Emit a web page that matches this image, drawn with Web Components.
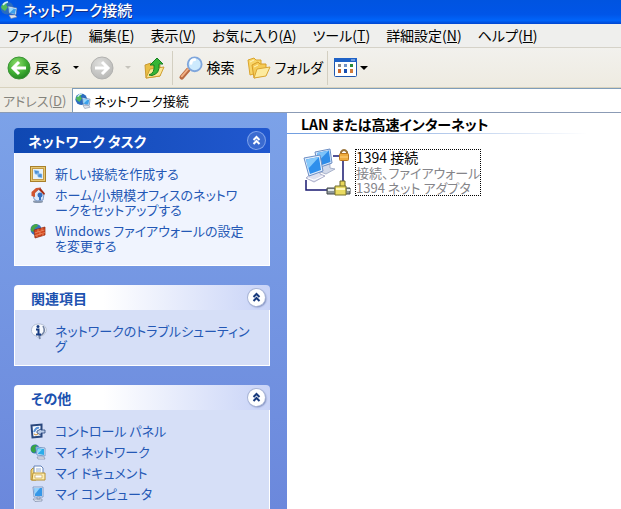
<!DOCTYPE html>
<html lang="ja">
<head>
<meta charset="utf-8">
<meta name="viewport" content="width=device-width, initial-scale=1">
<title>ネットワーク接続</title>
<style>
  body {
    margin: 0;
    font: 14px/15px "Noto Sans CJK JP", sans-serif;
    font-feature-settings: "palt";
    color: #000;
  }
</style>
</head>
<body>
<xp-window>
  <xp-titlebar slot="title">ネットワーク接続</xp-titlebar>

  <xp-menubar slot="menu">
    <xp-menu>ファイル(<u>F</u>)</xp-menu>
    <xp-menu>編集(<u>E</u>)</xp-menu>
    <xp-menu>表示(<u>V</u>)</xp-menu>
    <xp-menu>お気に入り(<u>A</u>)</xp-menu>
    <xp-menu>ツール(<u>T</u>)</xp-menu>
    <xp-menu>詳細設定(<u>N</u>)</xp-menu>
    <xp-menu>ヘルプ(<u>H</u>)</xp-menu>
  </xp-menubar>

  <xp-toolbar slot="toolbar"></xp-toolbar>
  <xp-address slot="address" value="ネットワーク接続"></xp-address>

  <xp-panel slot="side" primary>
    <span slot="heading">ネットワーク タスク</span>
    <xp-task icon="wizard">新しい接続を作成する</xp-task>
    <xp-task icon="home">ホーム/小規模オフィスのネットワ<br>ークをセットアップする</xp-task>
    <xp-task icon="firewall">Windows ファイアウォールの設定<br>を変更する</xp-task>
  </xp-panel>
  <xp-panel slot="side">
    <span slot="heading">関連項目</span>
    <xp-task icon="info">ネットワークのトラブルシューティン<br>グ</xp-task>
  </xp-panel>
  <xp-panel slot="side">
    <span slot="heading">その他</span>
    <xp-task icon="control">コントロール パネル</xp-task>
    <xp-task icon="places">マイ ネットワーク</xp-task>
    <xp-task icon="documents">マイ ドキュメント</xp-task>
    <xp-task icon="computer">マイ コンピュータ</xp-task>
  </xp-panel>

  <xp-group>
    <span slot="heading">LAN または高速インターネット</span>
    <xp-connection>
      <span slot="name">1394 接続</span>
      <span slot="status">接続、ファイアウォール</span>
      <span slot="device">1394 ネット アダプタ</span>
    </xp-connection>
  </xp-group>
</xp-window>

<script>
const ICONS = {
  network: ["0 0 18 18", `
    <circle cx="7" cy="7" r="6.500" fill="#2a6cc0"/>
    <path d="M1 6q2-5 7-5l-2 3 2 2-3 4-3-2z" fill="#52b95c"/>
    <path d="M3 4q2-3 5-3" stroke="#d4f0ff" stroke-width="1.500" fill="none"/>
    <path d="M8 5l9 2-1 7-7-2z" fill="#e4eefb" stroke="#35609c" stroke-width=".6"/>
    <path d="M9 6.500l7 1.500-1 5-5-1z" fill="#3ba0ec"/><path d="M9 6.500l5 1-4 4z" fill="#9bd8fb"/>
    <path d="M9 14l6 0 2 2-6 1.500z" fill="#dfe4ee" stroke="#7d8aa5" stroke-width=".6"/>`],
  back: ["0 0 24 24", `
    <defs><radialGradient id="g" cx=".4" cy=".3" r=".75"><stop stop-color="#8fdc6c"/><stop offset=".6" stop-color="#3fae32"/><stop offset="1" stop-color="#208020"/></radialGradient></defs>
    <circle cx="12" cy="12" r="11" fill="url(#g)" stroke="#3c9436"/>
    <path d="M12 6l-6 6 6 6M6.500 12H19" fill="none" stroke="#fff" stroke-width="3"/>`],
  forward: ["0 0 24 24", `
    <defs><radialGradient id="g" cx=".4" cy=".3" r=".8"><stop stop-color="#dededc"/><stop offset="1" stop-color="#b4b4b2"/></radialGradient></defs>
    <circle cx="12" cy="12" r="11" fill="url(#g)" stroke="#b2b2b0"/>
    <path d="M12 6l6 6-6 6M5 12h12.500" fill="none" stroke="#fff" stroke-width="3"/>`],
  up: ["0 0 22 22", `
    <path d="M1 8l6-2 2 2h7v11l-14 2z" fill="#e9bf45" stroke="#c99a33"/>
    <path d="M2 21L6 12l14-2-4 9z" fill="#fbe695" stroke="#cf9f33"/>
    <path d="M5 18q6-2 5-10H6l7-7 6 6h-4q1 10-7 11.500z" fill="#35b535" stroke="#168020"/>`],
  search: ["0 0 26 26", `
    <path d="M10 15L3 23" stroke="#b96a42" stroke-width="5" stroke-linecap="round"/>
    <path d="M10 14L3 22" stroke="#f2b184" stroke-width="2" stroke-linecap="round"/>
    <circle cx="17" cy="9" r="7.500" fill="#cdeafd" stroke="#7fa6dc" stroke-width="2"/>
    <path d="M13 8q0-4 4-4" fill="none" stroke="#fff" stroke-width="3" stroke-linecap="round"/>`],
  folders: ["0 0 24 24", `
    <path d="M1 4l6-2 2 2h5v12l-11 3z" fill="#f8d568" stroke="#dba52d"/>
    <path d="M5 9l6-3 2 2h6v11L7 22z" fill="#f5cb56" stroke="#d79c27"/>
    <path d="M7 22L10 13l13-2-4 9z" fill="#fdeb9f" stroke="#d9a534"/>
    <path d="M7 11l4-2M3 6l4-2" stroke="#fff3bd"/>`],
  views: ["0 0 23 19", `
    <rect x=".5" y=".5" width="22" height="18" rx="1" fill="#fff" stroke="#1d57b0"/>
    <rect width="23" height="4" fill="#1f62c6"/><path d="M17 2h4" stroke="#b8d4fa"/>
    <g><rect x="4" y="6" width="3" height="3" fill="#888"/><rect x="10" y="6" width="3" height="3" fill="#7194c9"/><rect x="16" y="6" width="3" height="3" fill="#278a39"/>
    <rect x="4" y="11" width="3" height="4" fill="#cb672c"/><rect x="10" y="11" width="3" height="4" fill="#164eb0"/><rect x="16" y="11" width="3" height="4" fill="#d07b3b"/></g>`],
  wizard: ["0 0 16 16", `
    <rect x=".5" y=".5" width="15" height="15" fill="#e6c872" stroke="#a8802c"/>
    <rect x="2.500" y="2.500" width="11" height="11" fill="#e7f2fb" stroke="#c49a48"/>
    <path d="M4 4l5 1v4L5 8zM7 7l5 1v4l-4-1z" fill="#4b8fd6" stroke="#a9d2f5" stroke-width=".5"/>`],
  home: ["0 0 16 16", `
    <ellipse cx="8" cy="14.500" rx="5" ry="1.500" fill="#8b99ae"/>
    <path d="M3 7l6-5 5 5-1 6-6 1-3-2z" fill="#dce9fa" stroke="#7f9dcc"/>
    <path d="M1.500 9V5L6 1l5-.5L5 6v4z" fill="#d05530"/>
    <path d="M10 .5l5 6-1 1.500-5-5z" fill="#a32c14"/>
    <circle cx="10" cy="8" r="2.500" fill="#346fc0"/><path d="M9 9h2v4H9z" fill="#346fc0"/>`],
  firewall: ["0 0 16 16", `
    <circle cx="6" cy="6.500" r="5.500" fill="#3973bd"/>
    <path d="M1 5q2-4 6-4l1 2-3 2-1 4-3-1z" fill="#47a845"/>
    <path d="M4 7l11-3v8L5 15z" fill="#d3461f" stroke="#8c2810" stroke-width=".7"/>
    <path d="M4.500 10l10-3M5 12.500l10-3M8 6v3M12 5v3M10 9v3M7 12v2M13 11v2" stroke="#f1a67c" stroke-width=".6"/>`],
  info: ["0 0 16 16", `
    <path d="M8 1a7 6 0 0 1 2.500 12L10 16l-4-3A7 6.200 0 0 1 8 1z" fill="#f5f8fd" stroke="#b4bfd4"/>
    <path d="M13 3q4 7-4 10l1 3" fill="none" stroke="#7384a5" stroke-width="1.500"/>
    <circle cx="8" cy="3.500" r="1.500" fill="#173c83"/>
    <path d="M6 6.500h2.500V11M6 11.500h5" fill="none" stroke="#173c83" stroke-width="2"/>`],
  control: ["0 0 16 16", `
    <path d="M1.500 2.500l10-1v12l-9 1z" fill="#f5f9ff" stroke="#29477d" stroke-width="2"/>
    <path d="M4 9q2-5 5-4" fill="none" stroke="#5c95da" stroke-width="2"/>
    <path d="M7 8l4-2v1h4v3h-4v2l-4-2z" fill="#b9cbe7" stroke="#29477d" stroke-width=".8"/>
    <path d="M4 11l2 1 2-1" fill="none" stroke="#d09035"/>`],
  places: ["0 0 16 16", `
    <circle cx="5" cy="5" r="4.500" fill="#3570bb"/><path d="M1 4q2-4 6-3L5 4l1 3-2 2-3-2z" fill="#36a445"/>
    <path d="M6 3l9 1v8l-8-1z" fill="#e7f0fb" stroke="#7c9cc7"/>
    <path d="M7 4l7 1v6l-6-1z" fill="#2bacea"/><path d="M8 5l4 .5-4 4z" fill="#8fdcfa"/>
    <path d="M7 13l7 0 1 2H8z" fill="#eef1f8" stroke="#7e89a5" stroke-width=".7"/>`],
  documents: ["0 0 16 16", `
    <path d="M1 5l2-2h3v12H1z" fill="#f3d77c" stroke="#b8902f"/>
    <path d="M4 1h7l2 2v9H4z" fill="#fff" stroke="#6683b8"/>
    <path d="M6 4h5M6 6h5" stroke="#92acd8"/>
    <path d="M3 8h12v7H2z" fill="#fdedb0" stroke="#b8902f"/><path d="M5 10h7v3H5z" fill="#fff" stroke="#c4a553" stroke-width=".7"/>`],
  computer: ["0 0 16 16", `
    <path d="M3 1l10 0v10l-9 0z" fill="#e4edfa" stroke="#809cc8"/>
    <path d="M4 2l8 0v8L5 10z" fill="#3597e8"/><path d="M4 2l6 0L5 8z" fill="#94d1fb"/>
    <path d="M7 11h3v2H7zM3 13l9 0 0 2-7 .5z" fill="#dde3ee" stroke="#7d8ba7" stroke-width=".7"/>`],
  lan: ["0 0 48 48", `
    <path d="M30 7h10v30M3 31v10h22" fill="none" stroke="#191970" stroke-width="1.500"/>
    <path d="M18 17l9-2 0 4 5 1-9 5-8-3z" fill="#d3daea" stroke="#8f9cba" stroke-width=".7"/>
    <path d="M12 3l15-3 2 14-14 5z" fill="#dceafb" stroke="#6c8ec4"/>
    <path d="M14 4l12-2.500 1.500 11.500L16 17z" fill="#2e8ce8"/><path d="M14 4l12-2.500-11 11z" fill="#7cc2f9"/>
    <path d="M9 24l8-3 0 4 5 2-11 6-8-4z" fill="#dfe1ef" stroke="#8f93b8" stroke-width=".7"/>
    <path d="M5 29l6 2 9-4" fill="none" stroke="#fff"/>
    <path d="M1 9l16-3 3 16-14 5z" fill="#e4effc" stroke="#6c8ec4"/>
    <path d="M3 10.500l13-2.500 2 13-11 4z" fill="#2f8fec"/><path d="M3 10.500l13-2.500L5 20z" fill="#86c9fb"/>
    <path d="M38 5V3q3-4 6 0v2" fill="none" stroke="#99733a" stroke-width="2"/>
    <rect x="36.500" y="4.500" width="9" height="7" rx="1" fill="#eeaa3c" stroke="#b87520"/><path d="M37 8h8" stroke="#ffd481"/>
    <path d="M37 32h5v7h-5z" fill="#e8d75a" stroke="#6c6628"/>
    <path d="M24 39h23v6H24z" fill="#8f9899" stroke="#43494a"/>
    <path d="M32 37h11v9H32z" fill="#eadb62" stroke="#77702a"/><path d="M25 41h6M44 41h3" stroke="#e4eaea" stroke-width="2"/>
    <path d="M33 40h9" stroke="#fff8b8" stroke-width="2"/>`]
};

class XpIcon extends HTMLElement {
  static get styles() {
    return /*css*/ `
      :host { display: block; flex: none; width: 16px; height: 16px; }
      svg { display: block; width: 100%; height: 100%; overflow: visible; }
    `;
  }

  connectedCallback() {
    if (!this.shadowRoot) this.attachShadow({ mode: "open" });
    const [viewBox, shapes] = ICONS[this.getAttribute("name")];
    this.shadowRoot.innerHTML = /*html*/ `
      <style>${XpIcon.styles}</style>
      <svg viewBox="${viewBox}" aria-hidden="true">${shapes}</svg>
    `;
  }
}

// Shared base: every other element only supplies its styles and markup.
class XpElement extends HTMLElement {
  connectedCallback() {
    if (!this.shadowRoot) this.attachShadow({ mode: "open" });
    this.shadowRoot.innerHTML = /*html*/ `
      <style>
        * { box-sizing: border-box; }
        button, input { font: inherit; font-feature-settings: inherit; color: inherit; padding: 0; margin: 0; border: 0; background: none; }
        ${this.styles}
      </style>
      ${this.markup}
    `;
  }
}

class XpWindow extends XpElement {
  get styles() {
    return /*css*/ `
      :host { display: grid; grid-template-rows: auto auto auto auto 1fr; height: 100vh; overflow: hidden; background: #fff; }
      .content { display: grid; grid-template-columns: 287px 1fr; min-height: 0; border-top: 1px solid #8b9bb5; }
      aside {
        display: flex; flex-direction: column; gap: 19px; min-height: 0; overflow: hidden;
        padding: 15px 17px 0 14px; background: linear-gradient(#7ca2e8, #6b88dc);
      }
    `;
  }
  get markup() {
    return /*html*/ `
      <slot name="title"></slot>
      <slot name="menu"></slot>
      <slot name="toolbar"></slot>
      <slot name="address"></slot>
      <div class="content">
        <aside><slot name="side"></slot></aside>
        <main><slot></slot></main>
      </div>
    `;
  }
}

class XpTitlebar extends XpElement {
  get styles() {
    return /*css*/ `
      :host { display: block; }
      header {
        display: flex; align-items: center; gap: 5px; height: 24px; padding: 0 2px 4px 0; color: #fff;
        background: linear-gradient(#0054e0, #0055e8 60%, #0064fa 85%, #0046d0);
      }
      h1 { margin: 0; font-size: 15px; font-weight: 500; line-height: 20px; text-shadow: 1px 1px #0f2f8c; }
      xp-icon { width: 18px; height: 18px; }
    `;
  }
  get markup() {
    return /*html*/ `<header><xp-icon name="network"></xp-icon><h1><slot></slot></h1></header>`;
  }
}

class XpMenubar extends XpElement {
  get styles() {
    return /*css*/ `
      :host { display: block; background: #efefed; border-bottom: 1px solid #d5d2c8; }
      nav { display: flex; gap: 16px; height: 23px; padding: 0 7px; }
    `;
  }
  get markup() {
    return /*html*/ `<nav><slot></slot></nav>`;
  }
}

class XpMenu extends XpElement {
  get styles() {
    return /*css*/ `
      :host { display: flex; }
      button { white-space: nowrap; }
    `;
  }
  get markup() {
    return /*html*/ `<button type="button"><slot></slot></button>`;
  }
}

class XpToolbar extends XpElement {
  get styles() {
    return /*css*/ `
      :host { display: block; border-bottom: 1px solid #d8d2bd; background: linear-gradient(#f2f1ed, #eeebe1); }
      div { display: flex; align-items: center; height: 39px; padding: 0 7px; }
      button { display: flex; align-items: center; gap: 4px; height: 30px; white-space: nowrap; }
      xp-icon { width: 24px; height: 24px; }
      .up { margin: 0 6px 0 2px; }
      .up xp-icon { width: 22px; height: 22px; }
      .views xp-icon { width: 23px; height: 19px; }
      .views { gap: 3px; }
      .drop { width: 28px; justify-content: center; }
      .drop::before, .views::after { content: ""; border: 4px solid transparent; border-top-color: #000; border-bottom: 0; }
      .drop::before { border-width: 3px; border-bottom: 0; }
      .drop[disabled]::before { border-top-color: #c5c3bc; }
      hr { width: 1px; height: 34px; margin: 0 6px 0 0; border: 0; background: #d3cfc1; }
      .folders { margin: 0 4px 0 12px; }
    `;
  }
  get markup() {
    return /*html*/ `
      <div role="toolbar">
        <button type="button"><xp-icon name="back"></xp-icon>戻る</button>
        <button type="button" class="drop" aria-label="戻る履歴"></button>
        <button type="button" disabled aria-label="進む"><xp-icon name="forward"></xp-icon></button>
        <button type="button" class="drop" disabled aria-label="進む履歴"></button>
        <button type="button" class="up" aria-label="上へ"><xp-icon name="up"></xp-icon></button>
        <hr>
        <button type="button"><xp-icon name="search"></xp-icon>検索</button>
        <button type="button" class="folders"><xp-icon name="folders"></xp-icon>フォルダ</button>
        <hr>
        <button type="button" class="views" aria-label="表示"><xp-icon name="views"></xp-icon></button>
      </div>
    `;
  }
}

class XpAddress extends XpElement {
  get styles() {
    return /*css*/ `
      :host { display: block; background: #efede5; font-size: 13px; }
      form { display: flex; height: 24px; }
      label { flex: none; width: 72px; padding: 5px 0 0 3px; color: #85847d; white-space: nowrap; }
      .field { display: flex; flex: 1; align-items: center; gap: 3px; padding-left: 2px; background: #fff; border: 1px solid #7f9db9; border-width: 1px 0 0 1px; }
      input { flex: 1; min-width: 0; height: 20px; outline: 0; }
    `;
  }
  get markup() {
    return /*html*/ `
      <form>
        <label for="address">アドレス(<u>D</u>)</label>
        <div class="field">
          <xp-icon name="network"></xp-icon>
          <input id="address" type="text" value="${this.getAttribute("value")}">
        </div>
      </form>
    `;
  }
}

class XpPanel extends XpElement {
  get styles() {
    return /*css*/ `
      :host { display: block; flex: none; }
      header {
        display: flex; align-items: center; justify-content: space-between; height: 25px; padding: 0 5px 0 17px;
        border-radius: 4px 4px 0 0; color: #1d52b0; background: linear-gradient(90deg, #fff 35%, #c8d3f7);
      }
      h2 { margin: 0; font-size: 14px; line-height: 18px; font-weight: 700; }
      button { width: 17px; height: 17px; border-radius: 50%; background: #fff; box-shadow: 0 0 0 1px #a9b5d6, 1px 1px 2px #5869a0; color: #183a7c; }
      svg { display: block; width: 17px; height: 17px; fill: none; stroke: currentColor; stroke-width: 2; }
      .body { display: flex; flex-direction: column; gap: 6px; padding: 13px 15px 12px; border: 1px solid #fff; border-top: 0; background: #d6dff7; }
      :host([primary]) header { padding-left: 14px; color: #fff; background: linear-gradient(90deg, #0f48b2, #2158cf); }
      :host([primary]) button { background: #3b6bd0; color: #fff; box-shadow: 0 0 0 1px #7da1ea; }
      :host([primary]) .body { background: #f0f4fe; }
    `;
  }
  get markup() {
    return /*html*/ `
      <section>
        <header>
          <h2><slot name="heading"></slot></h2>
          <button type="button" aria-label="折りたたむ"><svg viewBox="0 0 17 17"><path d="M5.500 8l3-3 3 3M5.500 12l3-3 3 3"/></svg></button>
        </header>
        <div class="body"><slot></slot></div>
      </section>
    `;
  }
}

class XpTask extends XpElement {
  get styles() {
    return /*css*/ `
      :host { display: block; font-size: 13px; }
      a { display: flex; gap: 9px; color: #2458b5; text-decoration: none; white-space: nowrap; }
      a:hover { text-decoration: underline; }
      .icon { height: 15px; }
    `;
  }
  get markup() {
    return /*html*/ `<a href="#"><div class="icon"><xp-icon name="${this.getAttribute("icon")}"></xp-icon></div><span><slot></slot></span></a>`;
  }
}

class XpGroup extends XpElement {
  get styles() {
    return /*css*/ `
      :host { display: block; }
      h2 { margin: 0; padding: 2px 14px 0; font-size: 14px; line-height: 18px; font-weight: 700; white-space: nowrap; }
      .rule { height: 1px; background: linear-gradient(90deg, #6f9de0, #b9cdec 50%, #fff 90%); }
      .items { padding: 15px 16px; }
    `;
  }
  get markup() {
    return /*html*/ `
      <section>
        <h2><slot name="heading"></slot></h2>
        <div class="rule"></div>
        <div class="items"><slot></slot></div>
      </section>
    `;
  }
}

class XpConnection extends XpElement {
  get styles() {
    return /*css*/ `
      :host { display: block; }
      a { display: flex; gap: 4px; color: #000; text-decoration: none; }
      xp-icon { width: 48px; height: 48px; }
      .text { display: flex; flex-direction: column; height: 47px; border: 1px dotted #000; white-space: nowrap; }
      .sub { font-size: 13px; color: #85858a; }
    `;
  }
  get markup() {
    return /*html*/ `
      <a href="#">
        <xp-icon name="lan"></xp-icon>
        <div class="text">
          <slot name="name"></slot>
          <span class="sub"><slot name="status"></slot></span>
          <span class="sub"><slot name="device"></slot></span>
        </div>
      </a>
    `;
  }
}

customElements.define("xp-icon", XpIcon);
customElements.define("xp-window", XpWindow);
customElements.define("xp-titlebar", XpTitlebar);
customElements.define("xp-menubar", XpMenubar);
customElements.define("xp-menu", XpMenu);
customElements.define("xp-toolbar", XpToolbar);
customElements.define("xp-address", XpAddress);
customElements.define("xp-panel", XpPanel);
customElements.define("xp-task", XpTask);
customElements.define("xp-group", XpGroup);
customElements.define("xp-connection", XpConnection);
</script>
</body>
</html>
